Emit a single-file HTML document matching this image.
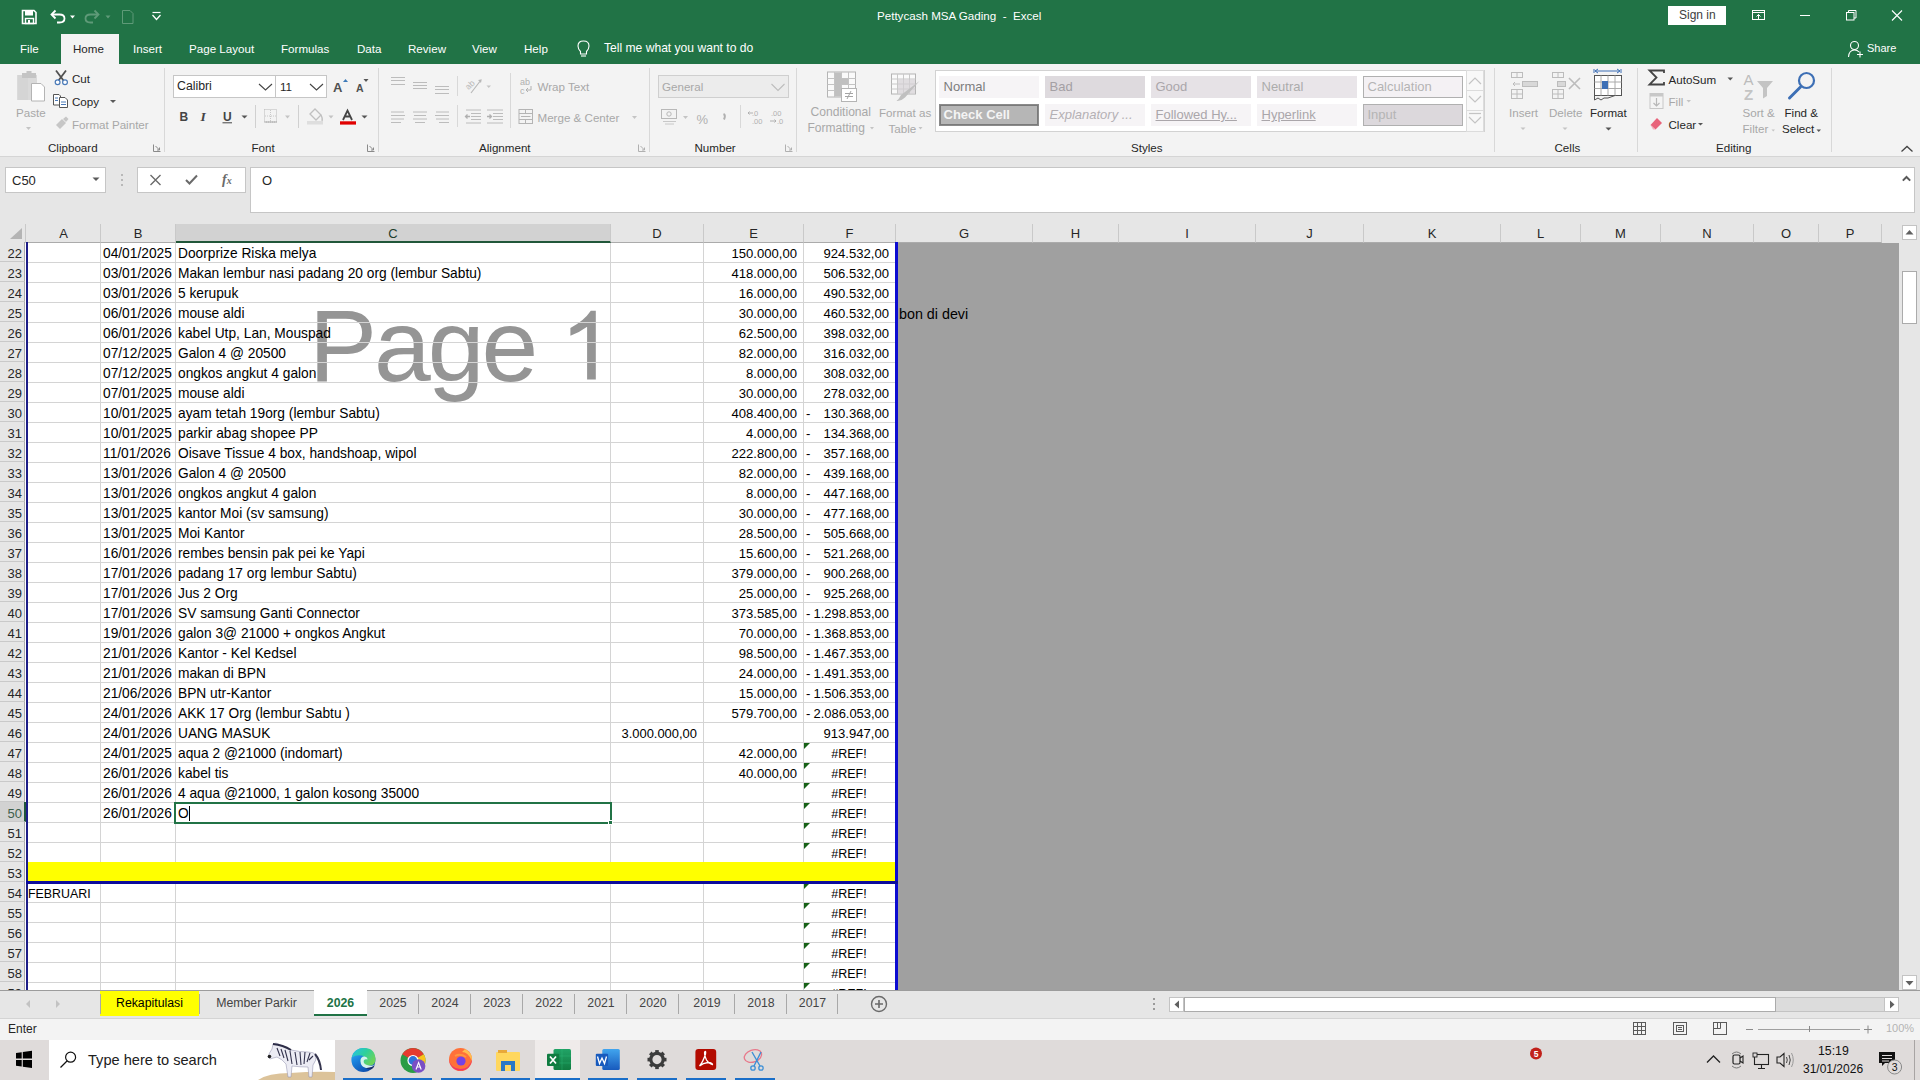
<!DOCTYPE html>
<html><head><meta charset="utf-8">
<style>
*{margin:0;padding:0;box-sizing:border-box}
html,body{width:1920px;height:1080px;overflow:hidden;background:#f3f3f3;font-family:"Liberation Sans",sans-serif;position:relative}
.a{position:absolute}
#title{left:0;top:0;width:1920px;height:64px;background:#217346}
.tt{position:absolute;color:#fff;font-size:12.3px;white-space:nowrap;line-height:14px}
.tab{position:absolute;top:43px;color:#fff;font-size:11.6px;line-height:11.6px;white-space:nowrap}
#hometab{left:61px;top:34px;width:58px;height:30px;background:#f3f3f3}
#ribbon{left:0;top:64px;width:1920px;height:93px;background:#f3f3f3;border-bottom:1px solid #d5d5d5}
.rl{position:absolute;font-size:12px;line-height:14px;color:#262626;white-space:nowrap}
.dis{color:#b1b1b1}
.gl{position:absolute;font-size:12px;line-height:14px;color:#262626;white-space:nowrap;top:141px}
.sep{position:absolute;width:1px;background:#d8d8d8}
#fbar{left:0;top:157px;width:1920px;height:67px;background:#e6e6e6}
.box{position:absolute;background:#fff;border:1px solid #c6c6c6}
#sheet{left:0;top:224px;width:1920px;height:767px;background:#fff;overflow:hidden}
.ch{position:absolute;top:0;height:19px;background:#e6e6e6;border-right:1px solid #c9c9c9;border-bottom:1px solid #ababab;font-size:13px;line-height:19px;text-align:center;color:#262626}
.ch.sel{background:#d2d2d2;border-bottom:2px solid #21573a;color:#1e3e2c}
.rh{position:absolute;left:0;width:25px;height:20px;background:#e6e6e6;border-bottom:1px solid #c9c9c9;border-right:1px solid #ababab;font-size:13px;line-height:23px;text-align:right;padding-right:2px;color:#262626}
.rh.sel{background:#d2d2d2;color:#3d5e4b;border-right:2px solid #21573a;width:26px}
.hl{position:absolute;left:26px;width:869px;height:1px;background:#d4d4d4}
.vl{position:absolute;top:243px;height:767px;width:1px;background:#d4d4d4}
.t{position:absolute;font-size:13.75px;line-height:20px;color:#000;white-space:nowrap}
.n{position:absolute;font-size:13.1px;line-height:20px;color:#000;white-space:nowrap}
.ref{width:92px;text-align:center;font-size:12.5px}
.tri{position:absolute;width:0;height:0;border-top:6px solid #176217;border-right:6px solid transparent;margin-top:0}
#gray{left:897px;top:243px;width:1002px;height:747px;background:#a0a0a0}
.stab{position:absolute;top:994px;height:18px;text-align:center;font-size:12.3px;line-height:18px;color:#444;white-space:nowrap}
.tsep{position:absolute;top:994px;width:1px;height:20px;background:#a8a8a8}
.u{position:absolute;font-size:11.6px;line-height:11.6px;color:#262626;white-space:nowrap}
.ud{position:absolute;font-size:11.6px;line-height:11.6px;color:#a8a8a8;white-space:nowrap}
.dd{position:absolute;width:0;height:0;border-left:3px solid transparent;border-right:3px solid transparent;border-top:3px solid #595959}
.ddl{position:absolute;width:0;height:0;border-left:3px solid transparent;border-right:3px solid transparent;border-top:3px solid #c0c0c0}
.sty{width:100px;height:22px}
.sl{position:absolute;font-size:13px;line-height:12px;white-space:nowrap}
</style></head><body>
<div id="title" class="a"></div>
<div class="tt" style="left:877px;top:9px;font-size:11.6px">Pettycash MSA Gading&nbsp; - &nbsp;Excel</div>
<svg class="a" style="left:0;top:0" width="180" height="34">
 <!-- save -->
 <path d="M22.5,10.5 H34 L36,12.5 V23.5 H22.5 Z" fill="none" stroke="#fff" stroke-width="1.6"/>
 <rect x="25" y="11" width="8" height="4.5" fill="#fff"/>
 <rect x="25.5" y="18.5" width="8" height="5" fill="none" stroke="#fff" stroke-width="1.4"/>
 <rect x="28" y="20" width="2" height="3.5" fill="#fff"/>
 <!-- undo -->
 <path d="M52,14.5 H59.5 Q64.5,14.5 64.5,18.5 Q64.5,22.5 59.5,22.5 H57" fill="none" stroke="#fff" stroke-width="1.8"/>
 <path d="M55.5,10.5 L51.5,14.5 L55.5,18.5" fill="none" stroke="#fff" stroke-width="1.8"/>
 <path d="M70,15.5 L75,15.5 L72.5,18.5 Z" fill="#fff"/>
 <!-- redo disabled -->
 <path d="M98,14.5 H90.5 Q85.5,14.5 85.5,18.5 Q85.5,22.5 90.5,22.5 H93" fill="none" stroke="#5f9a78" stroke-width="1.8"/>
 <path d="M94.5,10.5 L98.5,14.5 L94.5,18.5" fill="none" stroke="#5f9a78" stroke-width="1.8"/>
 <path d="M105.5,15.5 L110.5,15.5 L108,18.5 Z" fill="#5f9a78"/>
 <!-- new doc disabled -->
 <path d="M122.5,10.5 H130 L133,13.5 V23.5 H122.5 Z" fill="none" stroke="#5f9a78" stroke-width="1"/>
 <!-- customize -->
 <path d="M152.5,12.5 H160.5" stroke="#fff" stroke-width="1.2"/>
 <path d="M152.5,15 L156.5,19.5 L160.5,15" fill="none" stroke="#fff" stroke-width="1.3"/>
</svg>
<div class="a" style="left:1668px;top:6px;width:58px;height:19px;background:#fff"></div>
<div class="a" style="left:1679px;top:9px;font-size:12px;line-height:12px;color:#404040;white-space:nowrap">Sign in</div>
<svg class="a" style="left:1740px;top:0" width="180" height="64">
 <rect x="12.5" y="10.5" width="12" height="9" fill="none" stroke="#fff" stroke-width="1"/>
 <path d="M12.5,12.5 H24.5" stroke="#fff" stroke-width="1"/>
 <path d="M18.5,19 V14.5 M16.5,16.5 L18.5,14.5 L20.5,16.5" fill="none" stroke="#fff" stroke-width="1"/>
 <path d="M60,15.5 H70" stroke="#fff" stroke-width="1"/>
 <rect x="106.5" y="12.5" width="7.5" height="7.5" fill="none" stroke="#fff" stroke-width="1"/>
 <path d="M108.5,12.5 V10.5 H116 V18 H114" fill="none" stroke="#fff" stroke-width="1"/>
 <path d="M152,10.5 L162,20.5 M162,10.5 L152,20.5" stroke="#fff" stroke-width="1.1"/>
 <!-- share person -->
 <circle cx="114.5" cy="45.5" r="4" fill="none" stroke="#fff" stroke-width="1.1"/>
 <path d="M108.5,57 Q109,50 114.5,50 Q117.5,50 119,52" fill="none" stroke="#fff" stroke-width="1.1"/>
 <path d="M120,51.5 V57.5 M117,54.5 H123" stroke="#fff" stroke-width="1.1"/>
</svg>
<svg class="a" style="left:570px;top:34px" width="30" height="30">
 <path d="M10.5,17.5 Q8,15 8,12 Q8,7 13.5,7 Q19,7 19,12 Q19,15 16.5,17.5 V20 H10.5 Z" fill="none" stroke="#fff" stroke-width="1.1"/>
 <path d="M11,22 H16" stroke="#fff" stroke-width="1.1"/>
</svg>
<div id="hometab" class="a"></div>
<div class="tab" style="left:20px">File</div>
<div class="tab" style="left:73px;color:#262626">Home</div>
<div class="tab" style="left:133px">Insert</div>
<div class="tab" style="left:189px">Page Layout</div>
<div class="tab" style="left:281px">Formulas</div>
<div class="tab" style="left:357px">Data</div>
<div class="tab" style="left:408px">Review</div>
<div class="tab" style="left:472px">View</div>
<div class="tab" style="left:524px">Help</div>
<div class="tab" style="left:604px;font-size:12.1px">Tell me what you want to do</div>
<div class="tab" style="left:1867px;font-size:11px">Share</div>

<div id="ribbon" class="a"></div>
<!-- ===== Clipboard ===== -->
<svg class="a" style="left:0;top:64px" width="170" height="93" viewBox="0 64 170 93">
 <!-- paste -->
 <rect x="17" y="75" width="20" height="25" fill="#dadada"/>
 <path d="M19,75 V100 M21,75 V100 M23,75 V100 M25,75 V100 M27,75 V100" stroke="#d0d0d0" stroke-width="1"/>
 <rect x="22" y="73" width="14" height="5" fill="#c4c4c4"/>
 <rect x="26.5" y="71" width="5" height="3" fill="#c4c4c4"/>
 <path d="M31.5,83.5 H41 L44.5,87 V101 H31.5 Z" fill="#fff" stroke="#b4b4b4" stroke-width="1"/>
 <path d="M26,127 L31,127 L28.5,130 Z" fill="#c4c4c4"/>
 <!-- scissors -->
 <path d="M56,70.5 L63.5,80.5 M66,70.5 L58.5,80.5" stroke="#505050" stroke-width="1.8"/>
 <circle cx="57.6" cy="82.3" r="2.4" fill="#fff" stroke="#4a7ab8" stroke-width="1.2"/>
 <circle cx="65" cy="82.3" r="2.4" fill="#fff" stroke="#4a7ab8" stroke-width="1.2"/>
 <!-- copy -->
 <path d="M53.5,94.5 H59 L60.5,96 V105 H53.5 Z" fill="#fff" stroke="#555" stroke-width="1"/>
 <path d="M59.5,97.5 H65 L67.5,100 V107.5 H59.5 Z" fill="#fff" stroke="#555" stroke-width="1"/>
 <path d="M55,98 H58 M55,100.5 H58 M61,102 H66 M61,104.5 H66" stroke="#4a7ab8" stroke-width="1"/>
 <!-- format painter -->
 <path d="M56,125 L62,119 L66,123 L60,129 Z" fill="#c6c6c6"/>
 <path d="M63,119 L66,116.5 L68.5,119 L66,122 Z" fill="#c6c6c6"/>
 <!-- launcher -->
 <path d="M153.5,144.5 V151.5 H160.5" fill="none" stroke="#8a8a8a" stroke-width="1"/>
 <path d="M155.5,146 L159.5,150 M159.5,147.5 V150 H157" fill="none" stroke="#8a8a8a" stroke-width="1"/>
</svg>
<div class="ud" style="left:16px;top:107px">Paste</div>
<div class="u" style="left:72px;top:73px">Cut</div>
<div class="u" style="left:72px;top:95.5px">Copy</div>
<div class="dd" style="left:110px;top:100px"></div>
<div class="ud" style="left:72px;top:119px">Format Painter</div>
<div class="u" style="left:48px;top:142px">Clipboard</div>
<div class="sep" style="left:164px;top:68px;height:84px"></div>

<!-- ===== Font ===== -->
<div class="box" style="left:173px;top:75px;width:103px;height:23px"></div>
<div class="box" style="left:275px;top:75px;width:52px;height:23px"></div>
<div class="u" style="left:177px;top:81px;font-size:12.3px">Calibri</div>
<div class="u" style="left:280px;top:81px">11</div>
<svg class="a" style="left:170px;top:64px" width="210" height="93" viewBox="170 64 210 93">
 <path d="M259,84 L265.5,90 L272,84" fill="none" stroke="#444" stroke-width="1.1"/>
 <path d="M310,84 L316.5,90 L323,84" fill="none" stroke="#444" stroke-width="1.1"/>
 <!-- grow/shrink -->
 <text x="333" y="91.5" font-family="Liberation Sans" font-weight="bold" font-size="13" fill="#505050">A</text>
 <path d="M343,82 L345.5,79 L348,82 Z" fill="#3d7ab8"/>
 <text x="356" y="91.5" font-family="Liberation Sans" font-weight="bold" font-size="10.5" fill="#505050">A</text>
 <path d="M363.5,79 L368.5,79 L366,82 Z" fill="#555"/>
 <!-- B I U -->
 <text x="179.5" y="120.5" font-family="Liberation Sans" font-weight="bold" font-size="12" fill="#444">B</text>
 <text x="200.5" y="120.5" font-family="Liberation Serif" font-weight="bold" font-style="italic" font-size="13.5" fill="#444">I</text>
 <text x="223" y="120.5" font-family="Liberation Sans" font-weight="bold" font-size="12" fill="#444">U</text>
 <path d="M222.5,122.8 H232" stroke="#444" stroke-width="1"/>
 <path d="M241.5,115.5 L247.5,115.5 L244.5,118.5 Z" fill="#555"/>
 <rect x="255" y="105" width="1" height="23" fill="#d0d0d0"/>
 <!-- borders -->
 <rect x="264.5" y="109.5" width="12" height="12.5" fill="none" stroke="#b8b8b8" stroke-width="1" stroke-dasharray="1,1"/>
 <path d="M270.5,110 V122 M265,116 H276" stroke="#c8c8c8" stroke-width="1" stroke-dasharray="1,1"/>
 <path d="M264.5,122 H277" stroke="#a8a8a8" stroke-width="1"/>
 <path d="M285,115.5 L290,115.5 L287.5,118.5 Z" fill="#c4c4c4"/>
 <rect x="298" y="105" width="1" height="23" fill="#d0d0d0"/>
 <!-- fill color -->
 <path d="M310,114 L315,109 L321,115 L316,120 Z" fill="none" stroke="#c0c0c0" stroke-width="1.3"/>
 <path d="M321,115 Q323,119 322,121" fill="none" stroke="#c0c0c0" stroke-width="1.3"/>
 <rect x="307" y="121" width="16" height="3.5" fill="#dedede"/>
 <path d="M328.5,115.5 L333.5,115.5 L331,118.5 Z" fill="#c4c4c4"/>
 <!-- font color -->
 <path d="M343,120 L347.5,110.5 L352,120 M344.8,116.5 H350.2" fill="none" stroke="#444" stroke-width="1.8"/>
 <rect x="340" y="121.3" width="16" height="3.3" fill="#e00000"/>
 <path d="M361.5,115.5 L367.5,115.5 L364.5,118.5 Z" fill="#555"/>
 <!-- launcher -->
 <path d="M367.5,144.5 V151.5 H374.5" fill="none" stroke="#8a8a8a" stroke-width="1"/>
 <path d="M369.5,146 L373.5,150 M373.5,147.5 V150 H371" fill="none" stroke="#8a8a8a" stroke-width="1"/>
</svg>
<div class="u" style="left:251.5px;top:142px">Font</div>
<div class="sep" style="left:378px;top:68px;height:84px"></div>

<!-- ===== Alignment ===== -->
<svg class="a" style="left:380px;top:64px" width="270" height="93" viewBox="380 64 270 93">
 <g stroke="#bcbcbc" stroke-width="1">
 <path d="M391,77.5 H405 M391,80.5 H405 M391,84.5 H405"/>
 <path d="M413,82.5 H427 M413,85.5 H427 M413,88.5 H427"/>
 <path d="M435,86.5 H449 M435,89.5 H449 M435,93.5 H449"/>
 <path d="M391,112 H404 M391,115.5 H405 M391,119 H404 M391,122.5 H401"/>
 <path d="M413,112 H427 M414,115.5 H426 M413,119 H427 M415,122.5 H425"/>
 <path d="M436,112 H449 M435,115.5 H449 M436,119 H449 M439,122.5 H449"/>
 <path d="M466,110 H481 M471,113.5 H481 M471,116.5 H481 M471,119.5 H481 M466,123 H481"/>
 <path d="M487,110 H503 M493,113.5 H503 M493,116.5 H503 M493,119.5 H503 M487,123 H503"/>
 </g>
 <path d="M470,116.5 L466,116.5 M467.5,114.5 L465.5,116.5 L467.5,118.5" fill="none" stroke="#b0b0b0" stroke-width="1.3"/>
 <path d="M487,116.5 L491,116.5 M489.5,114.5 L491.5,116.5 L489.5,118.5" fill="none" stroke="#b0b0b0" stroke-width="1.3"/>
 <rect x="457" y="76" width="1" height="20" fill="#d8d8d8"/>
 <rect x="457" y="105" width="1" height="22" fill="#d8d8d8"/>
 <text x="466" y="88" font-family="Liberation Sans" font-size="8.5" fill="#b8b8b8" transform="rotate(-45 470 86)">ab</text>
 <path d="M471,93 L481,80 M478.5,80.5 L481,80 L480.5,82.5" fill="none" stroke="#b8b8b8" stroke-width="1.2"/>
 <path d="M486.5,85.5 L491,85.5 L488.75,88 Z" fill="#c4c4c4"/>
 <rect x="510" y="73" width="1" height="55" fill="#d8d8d8"/>
 <text x="520" y="85" font-family="Liberation Sans" font-size="9" fill="#b0b0b0">ab</text>
 <text x="520" y="93.5" font-family="Liberation Sans" font-size="9" fill="#b0b0b0">c</text>
 <path d="M526,90 H531 V86 M526,90 L528,88 M526,90 L528,92" fill="none" stroke="#b0b0b0" stroke-width="1"/>
 <rect x="519" y="109.5" width="13.5" height="14" fill="none" stroke="#b4b4b4" stroke-width="1"/>
 <path d="M519,113.5 H532.5 M519,119.5 H532.5 M525.5,109.5 V113.5 M525.5,119.5 V123.5 M521,116.5 H530.5" fill="none" stroke="#b4b4b4" stroke-width="1"/>
 <path d="M632,116 L637,116 L634.5,119 Z" fill="#c4c4c4"/>
 <path d="M638.5,144.5 V151.5 H645.5" fill="none" stroke="#b0b0b0" stroke-width="1"/>
 <path d="M640.5,146 L644.5,150 M644.5,147.5 V150 H642" fill="none" stroke="#b0b0b0" stroke-width="1"/>
</svg>
<div class="ud" style="left:537.5px;top:81px">Wrap Text</div>
<div class="ud" style="left:537.5px;top:112px">Merge &amp; Center</div>
<div class="u" style="left:479px;top:142px">Alignment</div>
<div class="sep" style="left:649px;top:68px;height:84px"></div>

<!-- ===== Number ===== -->
<div class="a" style="left:658px;top:75px;width:131px;height:23px;background:#ececec;border:1px solid #cfcfcf"></div>
<div class="ud" style="left:662px;top:81px">General</div>
<svg class="a" style="left:650px;top:64px" width="150" height="93" viewBox="650 64 150 93">
 <path d="M771.5,84 L778,90.5 L784.5,84" fill="none" stroke="#bdbdbd" stroke-width="1.1"/>
 <rect x="661.5" y="109.5" width="15" height="9" fill="none" stroke="#b8b8b8" stroke-width="1"/>
 <circle cx="669" cy="114" r="2.2" fill="none" stroke="#b8b8b8" stroke-width="1"/>
 <path d="M663,121.5 H676 M665,124 H674" stroke="#c8c8c8" stroke-width="1"/>
 <path d="M683,116 L688,116 L685.5,119 Z" fill="#c4c4c4"/>
 <text x="696.5" y="123.5" font-family="Liberation Sans" font-size="13" fill="#b0b0b0">%</text>
 <path d="M723.5,114 Q726,115 724,119.5" fill="none" stroke="#b0b0b0" stroke-width="2"/>
 <rect x="740" y="105" width="1" height="23" fill="#d8d8d8"/>
 <text x="752" y="116" font-family="Liberation Sans" font-size="7.5" fill="#b0b0b0">.0</text>
 <text x="752" y="123.5" font-family="Liberation Sans" font-size="7.5" fill="#b0b0b0">.00</text>
 <path d="M748,113 H753 M749.5,111.5 L748,113 L749.5,114.5" fill="none" stroke="#b0b0b0" stroke-width="1"/>
 <text x="771" y="116" font-family="Liberation Sans" font-size="7.5" fill="#b0b0b0">.00</text>
 <text x="777" y="123.5" font-family="Liberation Sans" font-size="7.5" fill="#b0b0b0">.0</text>
 <path d="M770,121 H776 M774.5,119.5 L776,121 L774.5,122.5" fill="none" stroke="#b0b0b0" stroke-width="1"/>
 <path d="M785.5,144.5 V151.5 H792.5" fill="none" stroke="#b0b0b0" stroke-width="1"/>
 <path d="M787.5,146 L791.5,150 M791.5,147.5 V150 H789" fill="none" stroke="#b0b0b0" stroke-width="1"/>
</svg>
<div class="u" style="left:694.5px;top:142px">Number</div>
<div class="sep" style="left:796px;top:68px;height:84px"></div>

<!-- ===== Styles ===== -->
<svg class="a" style="left:800px;top:64px" width="140" height="93" viewBox="800 64 140 93">
 <!-- conditional formatting -->
 <rect x="827.5" y="72" width="28" height="25" fill="#fafafa" stroke="#b4b4b4" stroke-width="1"/>
 <path d="M827.5,78.5 H855.5 M827.5,84.5 H855.5 M827.5,90.5 H855.5 M834.5,72 V97 M841.5,72 V97 M848.5,72 V97" stroke="#c4c4c4" stroke-width="1"/>
 <rect x="835" y="72.5" width="6" height="24" fill="#c0c0c0"/>
 <rect x="835" y="78.5" width="13" height="6" fill="#c0c0c0"/>
 <rect x="841.5" y="88.5" width="15" height="13" fill="#fff" stroke="#b4b4b4" stroke-width="1"/>
 <path d="M845,93.5 H853 M845,96.5 H853 M851,91 L847,99" stroke="#a4a4a4" stroke-width="1"/>
 <!-- format as table -->
 <rect x="891.5" y="74" width="24" height="20" fill="#fafafa" stroke="#b4b4b4" stroke-width="1"/>
 <path d="M891.5,79 H915.5 M891.5,84 H915.5 M891.5,89 H915.5 M897.5,74 V94 M903.5,74 V94 M909.5,74 V94" stroke="#c8c8c8" stroke-width="1"/>
 <rect x="898" y="79.5" width="17" height="14" fill="#d4d0d4" opacity="0.7"/>
 <path d="M919.5,81 L905,97.5 Q901,101.5 896.5,101 Q899,99 901,95 Z" fill="#c0c0c0"/>
 <path d="M870,127 L874,127 L872,129.5 Z" fill="#c4c4c4"/>
 <path d="M918.5,127 L922.5,127 L920.5,129.5 Z" fill="#c4c4c4"/>
</svg>
<div class="ud" style="left:810.5px;top:107px;font-size:12.1px">Conditional</div>
<div class="ud" style="left:807.5px;top:123px;font-size:12px">Formatting</div>
<div class="ud" style="left:879px;top:107px">Format as</div>
<div class="ud" style="left:888.5px;top:123px">Table</div>
<!-- gallery -->
<div class="a" style="left:935px;top:70px;width:550px;height:62px;background:#fff;border:1px solid #d2d2d2"></div>
<div class="a sty" style="left:939px;top:76px;background:#f6f4f6"></div>
<div class="a sty" style="left:1045px;top:76px;background:#dedade"></div>
<div class="a sty" style="left:1151px;top:76px;background:#e6e2e6"></div>
<div class="a sty" style="left:1257px;top:76px;background:#e9e5e9"></div>
<div class="a sty" style="left:1363px;top:76px;background:#f4f1f4;border:1px solid #b0b0b0"></div>
<div class="a sty" style="left:939px;top:104px;background:#b6b6b6;border:2px double #7a7a7a;outline:1px solid #8a8a8a;outline-offset:-1px"></div>
<div class="a sty" style="left:1045px;top:104px;background:#f6f4f6"></div>
<div class="a sty" style="left:1151px;top:104px;background:#f6f4f6"></div>
<div class="a sty" style="left:1257px;top:104px;background:#f6f4f6"></div>
<div class="a sty" style="left:1363px;top:104px;background:#dcd8dc;border:1px solid #b0b0b0"></div>
<div class="sl" style="left:943.5px;top:81px;color:#7d7d7d">Normal</div>
<div class="sl" style="left:1049.5px;top:81px;color:#a4a0a4">Bad</div>
<div class="sl" style="left:1155.5px;top:81px;color:#aaa6aa">Good</div>
<div class="sl" style="left:1261.5px;top:81px;color:#acacac">Neutral</div>
<div class="sl" style="left:1367.5px;top:81px;color:#b4b4b4">Calculation</div>
<div class="sl" style="left:943.5px;top:109px;color:#f4f4f4;font-weight:bold">Check Cell</div>
<div class="sl" style="left:1049.5px;top:109px;color:#b4b0b4;font-style:italic">Explanatory ...</div>
<div class="sl" style="left:1155.5px;top:109px;color:#aaa6aa;text-decoration:underline">Followed Hy...</div>
<div class="sl" style="left:1261.5px;top:109px;color:#aaa6aa;text-decoration:underline">Hyperlink</div>
<div class="sl" style="left:1367.5px;top:109px;color:#b4b4b4">Input</div>
<svg class="a" style="left:1466px;top:70px" width="20" height="62">
 <rect x="0.5" y="0.5" width="17" height="61" fill="#f8f8f8" stroke="#dcdcdc"/>
 <path d="M0.5,20.5 H17.5 M0.5,40.5 H17.5" stroke="#dcdcdc"/>
 <path d="M3,14 L9,8 L15,14" fill="none" stroke="#c4c4c4" stroke-width="1.2"/>
 <path d="M3,26 L9,32 L15,26" fill="none" stroke="#c4c4c4" stroke-width="1.2"/>
 <path d="M3,43.5 H15" stroke="#c4c4c4" stroke-width="1.2"/>
 <path d="M3,47 L9,53 L15,47" fill="none" stroke="#c4c4c4" stroke-width="1.2"/>
</svg>
<div class="u" style="left:1131px;top:142px">Styles</div>
<div class="sep" style="left:1494px;top:68px;height:84px"></div>

<!-- ===== Cells ===== -->
<svg class="a" style="left:1500px;top:64px" width="140" height="93" viewBox="1500 64 140 93">
 <!-- insert -->
 <g fill="none" stroke="#bcbcbc" stroke-width="1">
 <rect x="1511.5" y="72.5" width="11" height="5"/><path d="M1517,72.5 V77.5"/>
 <rect x="1511.5" y="89.5" width="11" height="9"/><path d="M1511.5,94 H1522.5 M1517,89.5 V98.5"/>
 <rect x="1522.5" y="81.5" width="15" height="5" fill="#d8d8d8"/>
 <path d="M1520,84 H1513 M1515,82 L1513,84 L1515,86"/>
 <!-- delete -->
 <rect x="1552.5" y="72.5" width="11" height="5"/><path d="M1558,72.5 V77.5"/>
 <rect x="1552.5" y="89.5" width="11" height="9"/><path d="M1552.5,94 H1563.5 M1558,89.5 V98.5"/>
 <rect x="1557.5" y="81.5" width="8" height="5" fill="#d8d8d8"/>
 </g>
 <path d="M1569,78 L1580,89 M1580,78 L1569,89" stroke="#bcbcbc" stroke-width="1.6"/>
 <!-- format -->
 <path d="M1594,69 V73 M1621,69 V73 M1595,71 H1620 M1598,69 L1595,71 L1598,73 M1617,69 L1620,71 L1617,73" fill="none" stroke="#3d6fb5" stroke-width="1"/>
 <rect x="1594.5" y="75.5" width="27" height="20" fill="#fff" stroke="#555" stroke-width="1"/>
 <path d="M1594.5,82 H1621.5 M1594.5,88.5 H1621.5 M1601,75.5 V95.5 M1608,75.5 V95.5 M1615,75.5 V95.5" stroke="#aaa" stroke-width="1"/>
 <rect x="1602" y="81" width="6" height="8" fill="#3d6fb5"/>
 <path d="M1594.5,95.5 V100 L1598,98 L1601,100 L1604,98 L1608,98 L1615,95.5" fill="none" stroke="#555" stroke-width="1"/>
 <path d="M1520.5,127.5 L1525.5,127.5 L1523,130 Z" fill="#c4c4c4"/>
 <path d="M1562.5,127.5 L1567.5,127.5 L1565,130 Z" fill="#c4c4c4"/>
 <path d="M1605.5,127.5 L1611.5,127.5 L1608.5,130.5 Z" fill="#555"/>
</svg>
<div class="ud" style="left:1509px;top:107px">Insert</div>
<div class="ud" style="left:1549px;top:107px">Delete</div>
<div class="u" style="left:1590px;top:107px">Format</div>
<div class="u" style="left:1554.5px;top:142px">Cells</div>
<div class="sep" style="left:1637px;top:68px;height:84px"></div>

<!-- ===== Editing ===== -->
<svg class="a" style="left:1640px;top:64px" width="190" height="93" viewBox="1640 64 190 93">
 <path d="M1664,73 V70.5 H1649.5 L1656.5,77.5 L1649.5,84.5 H1664 V82" fill="none" stroke="#444" stroke-width="1.8"/>
 <path d="M1727.5,77.5 L1733,77.5 L1730.25,80.5 Z" fill="#555"/>
 <rect x="1650" y="93.5" width="13" height="15" fill="#f4f4f4" stroke="#c8c8c8" stroke-width="1"/>
 <rect x="1650" y="93.5" width="13" height="3" fill="#c8c8c8"/>
 <path d="M1656.5,98 V106 M1653.5,103 L1656.5,106 L1659.5,103" fill="none" stroke="#b8b8b8" stroke-width="1.2"/>
 <path d="M1686.5,100 L1691,100 L1688.75,102.5 Z" fill="#c4c4c4"/>
 <path d="M1650.5,125 L1657,118 L1662,123 L1655.5,129.5 Z" fill="#e8637a"/>
 <path d="M1650.5,125 L1655.5,129.5 L1653,129.5 Z" fill="#f4b0bc"/>
 <path d="M1698,123 L1703,123 L1700.5,125.5 Z" fill="#555"/>
 <!-- sort filter -->
 <text x="1743.5" y="85" font-family="Liberation Sans" font-size="15" fill="#bcbcbc">A</text>
 <text x="1744" y="99.5" font-family="Liberation Sans" font-weight="bold" font-size="15" fill="#c4c4c4">Z</text>
 <path d="M1757,81 H1773 L1767,88 V96 L1763,98.5 V88 Z" fill="#c4c4c4"/>
 <path d="M1771.5,129.5 L1775,129.5 L1773.25,131.5 Z" fill="#c4c4c4"/>
 <!-- find -->
 <circle cx="1806.5" cy="80.5" r="7.5" fill="none" stroke="#3d6fb5" stroke-width="2.2"/>
 <path d="M1800.5,87 L1789.5,98" stroke="#3d6fb5" stroke-width="3" stroke-linecap="round"/>
 <path d="M1816.5,129.5 L1821,129.5 L1818.75,132 Z" fill="#555"/>
</svg>
<div class="u" style="left:1668.5px;top:73.5px">AutoSum</div>
<div class="ud" style="left:1668.5px;top:96px">Fill</div>
<div class="u" style="left:1668.5px;top:119px">Clear</div>
<div class="ud" style="left:1742.5px;top:107px">Sort &amp;</div>
<div class="ud" style="left:1742.5px;top:123px">Filter</div>
<div class="u" style="left:1784.5px;top:107px">Find &amp;</div>
<div class="u" style="left:1782px;top:123px">Select</div>
<div class="u" style="left:1716px;top:142px">Editing</div>
<div class="sep" style="left:1831px;top:68px;height:84px"></div>
<svg class="a" style="left:1895px;top:140px" width="24" height="16"><path d="M6.5,11.5 L12,6.5 L17.5,11.5" fill="none" stroke="#444" stroke-width="1.3"/></svg>


<div id="fbar" class="a"></div>
<div class="box" style="left:5px;top:167px;width:101px;height:26px"></div>
<div class="rl" style="left:12px;top:174px;font-size:13px">C50</div>
<div class="box" style="left:137px;top:167px;width:109px;height:26px"></div>
<svg class="a" style="left:80px;top:168px" width="180" height="26">
 <path d="M12.5,9.5 L19.5,9.5 L16,13 Z" fill="#5a5a5a"/>
 <circle cx="42" cy="7" r="1" fill="#a8a8a8"/><circle cx="42" cy="12" r="1" fill="#a8a8a8"/><circle cx="42" cy="17" r="1" fill="#a8a8a8"/>
 <path d="M70.5,7 L80.5,17 M80.5,7 L70.5,17" stroke="#6a6a6a" stroke-width="1.4"/>
 <path d="M106,12 L109.5,15.5 L117,7.5" fill="none" stroke="#6a6a6a" stroke-width="2"/>
</svg>
<div class="a" style="left:222px;top:173px;font-family:'Liberation Serif',serif;font-style:italic;font-weight:bold;font-size:14px;line-height:14px;color:#6a6a6a">f<span style="font-size:10px">x</span></div>
<svg class="a" style="left:1898px;top:172px;z-index:3" width="16" height="12"><path d="M4.8,8.6 L8.5,5 L12.2,8.6" fill="none" stroke="#5a5a5a" stroke-width="2"/></svg>
<div class="box" style="left:250px;top:167px;width:1665px;height:46px"></div>
<div class="rl" style="left:262px;top:174px;font-size:13px">O</div>

<div id="sheet" class="a">
</div>
<div class="a" style="left:0;top:224px;width:1899px;height:19px;background:#e6e6e6"></div>
<svg class="a" style="left:0;top:224px;z-index:2" width="26" height="19"><path d="M22,4 L22,15 L10,15 Z" fill="#b4b4b4"/><path d="M25.5,0 V19" stroke="#c9c9c9"/></svg>
<div style="position:absolute;left:0;top:224px;width:1920px;height:19px">
<div class="ch" style="left:27px;width:74px">A</div>
<div class="ch" style="left:101px;width:75px">B</div>
<div class="ch sel" style="left:176px;width:435px">C</div>
<div class="ch" style="left:611px;width:93px">D</div>
<div class="ch" style="left:704px;width:100px">E</div>
<div class="ch" style="left:804px;width:92px">F</div>
<div class="ch" style="left:896px;width:137px">G</div>
<div class="ch" style="left:1033px;width:86px">H</div>
<div class="ch" style="left:1119px;width:137px">I</div>
<div class="ch" style="left:1256px;width:108px">J</div>
<div class="ch" style="left:1364px;width:137px">K</div>
<div class="ch" style="left:1501px;width:80px">L</div>
<div class="ch" style="left:1581px;width:80px">M</div>
<div class="ch" style="left:1661px;width:93px">N</div>
<div class="ch" style="left:1754px;width:65px">O</div>
<div class="ch" style="left:1819px;width:63px">P</div>
</div>
<div style="position:absolute;left:0;top:0">
<div class="rh" style="top:242px">22</div>
<div class="rh" style="top:262px">23</div>
<div class="rh" style="top:282px">24</div>
<div class="rh" style="top:302px">25</div>
<div class="rh" style="top:322px">26</div>
<div class="rh" style="top:342px">27</div>
<div class="rh" style="top:362px">28</div>
<div class="rh" style="top:382px">29</div>
<div class="rh" style="top:402px">30</div>
<div class="rh" style="top:422px">31</div>
<div class="rh" style="top:442px">32</div>
<div class="rh" style="top:462px">33</div>
<div class="rh" style="top:482px">34</div>
<div class="rh" style="top:502px">35</div>
<div class="rh" style="top:522px">36</div>
<div class="rh" style="top:542px">37</div>
<div class="rh" style="top:562px">38</div>
<div class="rh" style="top:582px">39</div>
<div class="rh" style="top:602px">40</div>
<div class="rh" style="top:622px">41</div>
<div class="rh" style="top:642px">42</div>
<div class="rh" style="top:662px">43</div>
<div class="rh" style="top:682px">44</div>
<div class="rh" style="top:702px">45</div>
<div class="rh" style="top:722px">46</div>
<div class="rh" style="top:742px">47</div>
<div class="rh" style="top:762px">48</div>
<div class="rh" style="top:782px">49</div>
<div class="rh sel" style="top:802px">50</div>
<div class="rh" style="top:822px">51</div>
<div class="rh" style="top:842px">52</div>
<div class="rh" style="top:862px">53</div>
<div class="rh" style="top:882px">54</div>
<div class="rh" style="top:902px">55</div>
<div class="rh" style="top:922px">56</div>
<div class="rh" style="top:942px">57</div>
<div class="rh" style="top:962px">58</div>
<div class="rh" style="top:982px">59</div>
</div>
<div id="gray" class="a"></div>
<div class="a" id="wm" style="left:309px;top:286px;font-size:102px;line-height:120px;color:#959595;white-space:nowrap;letter-spacing:-3px">Page</div>
<svg class="a" style="left:0;top:0" width="700" height="420"><path d="M590.8,310.8 L595.8,310.8 L595.8,379.6 L587.1,379.6 L587.1,326.7 Q580,332 570.4,335.8 L570.4,327.9 Q584,321 590.8,310.8 Z" fill="#959595"/></svg>
<div class="hl" style="top:262px"></div>
<div class="hl" style="top:282px"></div>
<div class="hl" style="top:302px"></div>
<div class="hl" style="top:322px"></div>
<div class="hl" style="top:342px"></div>
<div class="hl" style="top:362px"></div>
<div class="hl" style="top:382px"></div>
<div class="hl" style="top:402px"></div>
<div class="hl" style="top:422px"></div>
<div class="hl" style="top:442px"></div>
<div class="hl" style="top:462px"></div>
<div class="hl" style="top:482px"></div>
<div class="hl" style="top:502px"></div>
<div class="hl" style="top:522px"></div>
<div class="hl" style="top:542px"></div>
<div class="hl" style="top:562px"></div>
<div class="hl" style="top:582px"></div>
<div class="hl" style="top:602px"></div>
<div class="hl" style="top:622px"></div>
<div class="hl" style="top:642px"></div>
<div class="hl" style="top:662px"></div>
<div class="hl" style="top:682px"></div>
<div class="hl" style="top:702px"></div>
<div class="hl" style="top:722px"></div>
<div class="hl" style="top:742px"></div>
<div class="hl" style="top:762px"></div>
<div class="hl" style="top:782px"></div>
<div class="hl" style="top:802px"></div>
<div class="hl" style="top:822px"></div>
<div class="hl" style="top:842px"></div>
<div class="hl" style="top:862px"></div>
<div class="hl" style="top:882px"></div>
<div class="hl" style="top:902px"></div>
<div class="hl" style="top:922px"></div>
<div class="hl" style="top:942px"></div>
<div class="hl" style="top:962px"></div>
<div class="hl" style="top:982px"></div>
<div class="hl" style="top:1002px"></div>
<div class="vl" style="left:100px"></div>
<div class="vl" style="left:175px"></div>
<div class="vl" style="left:610px"></div>
<div class="vl" style="left:703px"></div>
<div class="vl" style="left:803px"></div>
<div class="t" style="left:103px;top:244px">04/01/2025</div>
<div class="t" style="left:178px;top:244px">Doorprize Riska melya</div>
<div class="n" style="right:1123px;top:244px">150.000,00</div>
<div class="n" style="right:1031px;top:244px">924.532,00</div>
<div class="t" style="left:103px;top:264px">03/01/2026</div>
<div class="t" style="left:178px;top:264px">Makan lembur nasi padang 20 org (lembur Sabtu)</div>
<div class="n" style="right:1123px;top:264px">418.000,00</div>
<div class="n" style="right:1031px;top:264px">506.532,00</div>
<div class="t" style="left:103px;top:284px">03/01/2026</div>
<div class="t" style="left:178px;top:284px">5 kerupuk</div>
<div class="n" style="right:1123px;top:284px">16.000,00</div>
<div class="n" style="right:1031px;top:284px">490.532,00</div>
<div class="t" style="left:103px;top:304px">06/01/2026</div>
<div class="t" style="left:178px;top:304px">mouse aldi</div>
<div class="n" style="right:1123px;top:304px">30.000,00</div>
<div class="n" style="right:1031px;top:304px">460.532,00</div>
<div class="t" style="left:103px;top:324px">06/01/2026</div>
<div class="t" style="left:178px;top:324px">kabel Utp, Lan, Mouspad</div>
<div class="n" style="right:1123px;top:324px">62.500,00</div>
<div class="n" style="right:1031px;top:324px">398.032,00</div>
<div class="t" style="left:103px;top:344px">07/12/2025</div>
<div class="t" style="left:178px;top:344px">Galon 4 @ 20500</div>
<div class="n" style="right:1123px;top:344px">82.000,00</div>
<div class="n" style="right:1031px;top:344px">316.032,00</div>
<div class="t" style="left:103px;top:364px">07/12/2025</div>
<div class="t" style="left:178px;top:364px">ongkos angkut 4 galon</div>
<div class="n" style="right:1123px;top:364px">8.000,00</div>
<div class="n" style="right:1031px;top:364px">308.032,00</div>
<div class="t" style="left:103px;top:384px">07/01/2025</div>
<div class="t" style="left:178px;top:384px">mouse aldi</div>
<div class="n" style="right:1123px;top:384px">30.000,00</div>
<div class="n" style="right:1031px;top:384px">278.032,00</div>
<div class="t" style="left:103px;top:404px">10/01/2025</div>
<div class="t" style="left:178px;top:404px">ayam tetah 19org (lembur Sabtu)</div>
<div class="n" style="right:1123px;top:404px">408.400,00</div>
<div class="n" style="left:806px;top:404px">-</div>
<div class="n" style="right:1031px;top:404px">130.368,00</div>
<div class="t" style="left:103px;top:424px">10/01/2025</div>
<div class="t" style="left:178px;top:424px">parkir abag shopee PP</div>
<div class="n" style="right:1123px;top:424px">4.000,00</div>
<div class="n" style="left:806px;top:424px">-</div>
<div class="n" style="right:1031px;top:424px">134.368,00</div>
<div class="t" style="left:103px;top:444px">11/01/2026</div>
<div class="t" style="left:178px;top:444px">Oisave Tissue 4 box, handshoap, wipol</div>
<div class="n" style="right:1123px;top:444px">222.800,00</div>
<div class="n" style="left:806px;top:444px">-</div>
<div class="n" style="right:1031px;top:444px">357.168,00</div>
<div class="t" style="left:103px;top:464px">13/01/2026</div>
<div class="t" style="left:178px;top:464px">Galon 4 @ 20500</div>
<div class="n" style="right:1123px;top:464px">82.000,00</div>
<div class="n" style="left:806px;top:464px">-</div>
<div class="n" style="right:1031px;top:464px">439.168,00</div>
<div class="t" style="left:103px;top:484px">13/01/2026</div>
<div class="t" style="left:178px;top:484px">ongkos angkut 4 galon</div>
<div class="n" style="right:1123px;top:484px">8.000,00</div>
<div class="n" style="left:806px;top:484px">-</div>
<div class="n" style="right:1031px;top:484px">447.168,00</div>
<div class="t" style="left:103px;top:504px">13/01/2025</div>
<div class="t" style="left:178px;top:504px">kantor Moi (sv samsung)</div>
<div class="n" style="right:1123px;top:504px">30.000,00</div>
<div class="n" style="left:806px;top:504px">-</div>
<div class="n" style="right:1031px;top:504px">477.168,00</div>
<div class="t" style="left:103px;top:524px">13/01/2025</div>
<div class="t" style="left:178px;top:524px">Moi Kantor</div>
<div class="n" style="right:1123px;top:524px">28.500,00</div>
<div class="n" style="left:806px;top:524px">-</div>
<div class="n" style="right:1031px;top:524px">505.668,00</div>
<div class="t" style="left:103px;top:544px">16/01/2026</div>
<div class="t" style="left:178px;top:544px">rembes bensin pak pei ke Yapi</div>
<div class="n" style="right:1123px;top:544px">15.600,00</div>
<div class="n" style="left:806px;top:544px">-</div>
<div class="n" style="right:1031px;top:544px">521.268,00</div>
<div class="t" style="left:103px;top:564px">17/01/2026</div>
<div class="t" style="left:178px;top:564px">padang 17 org lembur Sabtu)</div>
<div class="n" style="right:1123px;top:564px">379.000,00</div>
<div class="n" style="left:806px;top:564px">-</div>
<div class="n" style="right:1031px;top:564px">900.268,00</div>
<div class="t" style="left:103px;top:584px">17/01/2026</div>
<div class="t" style="left:178px;top:584px">Jus 2 Org</div>
<div class="n" style="right:1123px;top:584px">25.000,00</div>
<div class="n" style="left:806px;top:584px">-</div>
<div class="n" style="right:1031px;top:584px">925.268,00</div>
<div class="t" style="left:103px;top:604px">17/01/2026</div>
<div class="t" style="left:178px;top:604px">SV samsung Ganti Connector</div>
<div class="n" style="right:1123px;top:604px">373.585,00</div>
<div class="n" style="left:806px;top:604px">-</div>
<div class="n" style="right:1031px;top:604px;font-size:12.95px">1.298.853,00</div>
<div class="t" style="left:103px;top:624px">19/01/2026</div>
<div class="t" style="left:178px;top:624px">galon 3@ 21000 + ongkos Angkut</div>
<div class="n" style="right:1123px;top:624px">70.000,00</div>
<div class="n" style="left:806px;top:624px">-</div>
<div class="n" style="right:1031px;top:624px;font-size:12.95px">1.368.853,00</div>
<div class="t" style="left:103px;top:644px">21/01/2026</div>
<div class="t" style="left:178px;top:644px">Kantor - Kel Kedsel</div>
<div class="n" style="right:1123px;top:644px">98.500,00</div>
<div class="n" style="left:806px;top:644px">-</div>
<div class="n" style="right:1031px;top:644px;font-size:12.95px">1.467.353,00</div>
<div class="t" style="left:103px;top:664px">21/01/2026</div>
<div class="t" style="left:178px;top:664px">makan di BPN</div>
<div class="n" style="right:1123px;top:664px">24.000,00</div>
<div class="n" style="left:806px;top:664px">-</div>
<div class="n" style="right:1031px;top:664px;font-size:12.95px">1.491.353,00</div>
<div class="t" style="left:103px;top:684px">21/06/2026</div>
<div class="t" style="left:178px;top:684px">BPN utr-Kantor</div>
<div class="n" style="right:1123px;top:684px">15.000,00</div>
<div class="n" style="left:806px;top:684px">-</div>
<div class="n" style="right:1031px;top:684px;font-size:12.95px">1.506.353,00</div>
<div class="t" style="left:103px;top:704px">24/01/2026</div>
<div class="t" style="left:178px;top:704px">AKK 17 Org (lembur Sabtu )</div>
<div class="n" style="right:1123px;top:704px">579.700,00</div>
<div class="n" style="left:806px;top:704px">-</div>
<div class="n" style="right:1031px;top:704px;font-size:12.95px">2.086.053,00</div>
<div class="t" style="left:103px;top:724px">24/01/2026</div>
<div class="t" style="left:178px;top:724px">UANG MASUK</div>
<div class="n" style="right:1223px;top:724px;font-size:12.95px">3.000.000,00</div>
<div class="n" style="right:1031px;top:724px">913.947,00</div>
<div class="t" style="left:103px;top:744px">24/01/2025</div>
<div class="t" style="left:178px;top:744px">aqua 2 @21000 (indomart)</div>
<div class="n" style="right:1123px;top:744px">42.000,00</div>
<div class="t ref" style="left:803px;top:744px">#REF!</div>
<div class="tri" style="left:804px;top:743px"></div>
<div class="t" style="left:103px;top:764px">26/01/2026</div>
<div class="t" style="left:178px;top:764px">kabel tis</div>
<div class="n" style="right:1123px;top:764px">40.000,00</div>
<div class="t ref" style="left:803px;top:764px">#REF!</div>
<div class="tri" style="left:804px;top:763px"></div>
<div class="t" style="left:103px;top:784px">26/01/2026</div>
<div class="t" style="left:178px;top:784px">4 aqua @21000, 1 galon kosong 35000</div>
<div class="t ref" style="left:803px;top:784px">#REF!</div>
<div class="tri" style="left:804px;top:783px"></div>
<div class="t" style="left:103px;top:804px">26/01/2026</div>
<div class="t ref" style="left:803px;top:804px">#REF!</div>
<div class="tri" style="left:804px;top:803px"></div>
<div class="t ref" style="left:803px;top:824px">#REF!</div>
<div class="tri" style="left:804px;top:823px"></div>
<div class="t ref" style="left:803px;top:844px">#REF!</div>
<div class="tri" style="left:804px;top:843px"></div>
<div class="t ref" style="left:803px;top:884px">#REF!</div>
<div class="tri" style="left:804px;top:883px"></div>
<div class="t ref" style="left:803px;top:904px">#REF!</div>
<div class="tri" style="left:804px;top:903px"></div>
<div class="t ref" style="left:803px;top:924px">#REF!</div>
<div class="tri" style="left:804px;top:923px"></div>
<div class="t ref" style="left:803px;top:944px">#REF!</div>
<div class="tri" style="left:804px;top:943px"></div>
<div class="t ref" style="left:803px;top:964px">#REF!</div>
<div class="tri" style="left:804px;top:963px"></div>
<div class="t ref" style="left:803px;top:984px">#REF!</div>
<div class="tri" style="left:804px;top:983px"></div>
<div class="t" style="left:28px;top:884px;font-size:12.4px">FEBRUARI</div>
<div class="t" style="left:899px;top:304px;font-size:14.3px">bon di devi</div>
<div class="a" style="left:26px;top:862px;width:869px;height:20px;background:#ffff00"></div>
<!-- selection -->
<div class="a" style="left:174px;top:802px;width:438px;height:22px;border:2px solid #217346"></div>
<div class="a" style="left:608px;top:820px;width:5px;height:5px;background:#217346;border:1px solid #fff"></div>
<div class="t" style="left:178px;top:804px">O</div>
<div class="a" style="left:189px;top:806px;width:1px;height:15px;background:#000"></div>
<!-- page break lines -->
<div class="a" style="left:26px;top:242px;width:2px;height:748px;background:#1d1d88"></div>
<div class="a" style="left:895px;top:242px;width:3px;height:748px;background:#0c0cd0"></div>
<div class="a" style="left:26px;top:881px;width:872px;height:3px;background:#0c0c9c"></div>

<!-- sheet tabs bar -->
<div class="a" style="left:0;top:990px;width:1920px;height:28px;background:#e6e6e6;border-top:1px solid #9c9c9c"></div>
<!-- nav arrows -->
<svg class="a" style="left:24px;top:997px" width="40" height="14"><path d="M6,3 L2,7 L6,11 Z" fill="#c2c2c2"/><path d="M32,3 L36,7 L32,11 Z" fill="#c2c2c2"/></svg>
<div class="a" style="left:100px;top:991px;width:99px;height:25px;background:#ffff00"></div>
<div class="stab" style="left:100px;width:99px;color:#000">Rekapitulasi</div>
<div class="stab" style="left:199px;width:115px">Member Parkir</div>
<div class="a" style="left:314px;top:990px;width:53px;height:26px;background:#fff;border-bottom:2px solid #217346"></div>
<div class="stab" style="left:314px;width:53px;color:#217346;font-weight:bold">2026</div>
<div class="stab" style="left:367px;width:52px">2025</div>
<div class="stab" style="left:419px;width:52px">2024</div>
<div class="stab" style="left:471px;width:52px">2023</div>
<div class="stab" style="left:523px;width:52px">2022</div>
<div class="stab" style="left:575px;width:52px">2021</div>
<div class="stab" style="left:627px;width:52px">2020</div>
<div class="stab" style="left:679px;width:56px">2019</div>
<div class="stab" style="left:735px;width:52px">2018</div>
<div class="stab" style="left:787px;width:51px">2017</div>
<div class="tsep" style="left:100px"></div><div class="tsep" style="left:199px"></div>
<div class="tsep" style="left:418px"></div><div class="tsep" style="left:470px"></div><div class="tsep" style="left:522px"></div>
<div class="tsep" style="left:574px"></div><div class="tsep" style="left:626px"></div><div class="tsep" style="left:678px"></div>
<div class="tsep" style="left:734px"></div><div class="tsep" style="left:786px"></div><div class="tsep" style="left:837px"></div>
<svg class="a" style="left:869px;top:994px" width="20" height="20"><circle cx="10" cy="10" r="7.5" fill="none" stroke="#6a6a6a" stroke-width="1.4"/><path d="M10,6 V14 M6,10 H14" stroke="#6a6a6a" stroke-width="1.6"/></svg>
<!-- h scrollbar -->
<div class="a" style="left:1153px;top:998px;width:2px;height:2px;background:#9a9a9a"></div>
<div class="a" style="left:1153px;top:1003px;width:2px;height:2px;background:#9a9a9a"></div>
<div class="a" style="left:1153px;top:1008px;width:2px;height:2px;background:#9a9a9a"></div>
<div class="a" style="left:1169px;top:997px;width:730px;height:15px;background:#dcdcdc;border:1px solid #c3c3c3"></div>
<div class="a" style="left:1169px;top:997px;width:15px;height:15px;background:#fff;border:1px solid #c3c3c3"></div>
<svg class="a" style="left:1173px;top:1000px" width="8" height="9"><path d="M6,0.5 L1.5,4.5 L6,8.5 Z" fill="#606060"/></svg>
<div class="a" style="left:1184px;top:997px;width:592px;height:15px;background:#fff;border:1px solid #ababab"></div>
<div class="a" style="left:1884px;top:997px;width:15px;height:15px;background:#fff;border:1px solid #c3c3c3"></div>
<svg class="a" style="left:1888px;top:1000px" width="8" height="9"><path d="M2,0.5 L6.5,4.5 L2,8.5 Z" fill="#606060"/></svg>
<!-- v scrollbar -->
<div class="a" style="left:1899px;top:224px;width:21px;height:766px;background:#e6e6e6"></div>
<div class="a" style="left:1902px;top:225px;width:15px;height:15px;background:#fff;border:1px solid #c3c3c3"></div>
<svg class="a" style="left:1905px;top:229px" width="9" height="7"><path d="M0.5,5.5 L4.5,1 L8.5,5.5 Z" fill="#606060"/></svg>
<div class="a" style="left:1902px;top:271px;width:15px;height:53px;background:#fff;border:1px solid #ababab"></div>
<div class="a" style="left:1902px;top:975px;width:15px;height:15px;background:#fff;border:1px solid #c3c3c3"></div>
<svg class="a" style="left:1905px;top:980px" width="9" height="7"><path d="M0.5,1 L4.5,5.5 L8.5,1 Z" fill="#606060"/></svg>
<!-- status bar -->
<div class="a" style="left:0;top:1018px;width:1920px;height:22px;background:#f3f3f3;border-top:1px solid #d4d4d4"></div>
<div class="rl" style="left:8px;top:1022px;font-size:12px">Enter</div>
<!-- taskbar -->
<div class="a" style="left:0;top:1040px;width:1920px;height:40px;background:#dfdbda"></div>
<div class="a" style="left:49px;top:1040px;width:286px;height:40px;background:#fff"></div>
<div class="a" style="left:88px;top:1053px;font-size:14.6px;line-height:14px;color:#202020;white-space:nowrap">Type here to search</div>
<svg class="a" style="left:0;top:1040px" width="1920" height="40">
 <!-- windows logo -->
 <path d="M16,13 L21.7,12.2 V18.5 H16 Z M22.8,12 L32,10.8 V18.5 H22.8 Z M16,20 H21.7 V26.5 L16,25.7 Z M22.8,20 H32 V28 L22.8,26.8 Z" fill="#000"/>
 <!-- magnifier -->
 <circle cx="70.6" cy="17.2" r="5" fill="none" stroke="#111" stroke-width="1.2"/>
 <path d="M67,21 L60.5,27.5" stroke="#111" stroke-width="1.3"/>
 <!-- zebra -->
 <path d="M258,40 Q268,33 290,33 Q315,31 335,32 V40 Z" fill="#dcc39a"/>
 <path d="M268,17 Q269,13 272,9 L273,4 L276,3 Q283,6 291,10 Q300,12 308,12 Q314,12 316,15 Q317,20 313,25 L312,37 L309,37 L308,27 Q300,27 292,26 L291,37 L288,37 L286,24 Q282,19 277,17 Q273,18 270,19 Z" fill="#ececf4" stroke="#8a8aa8" stroke-width="0.5"/>
 <path d="M273,4 Q283,5 291,10" fill="none" stroke="#2e2e48" stroke-width="2"/>
 <path d="M277,8 L280,16 M281,9 L284,18 M285,10 L288,21 M290,11 L292,24 M295,12 L297,25 M300,12 L301,25 M305,12 L304,24 M310,13 L307,22 M313,16 L309,20" stroke="#34344e" stroke-width="1.1"/>
 <path d="M315,14 Q320,20 321,30" fill="none" stroke="#34344e" stroke-width="2"/>
 <circle cx="269.5" cy="16.5" r="1.8" fill="#222"/>
 <!-- task buttons -->
 <rect x="535" y="0" width="45" height="38" fill="#efebea"/>
 <!-- underlines -->
 <g fill="#1a6ec8">
  <rect x="343" y="38" width="40" height="2"/><rect x="392" y="38" width="40" height="2"/>
  <rect x="441" y="38" width="40" height="2"/><rect x="490" y="38" width="40" height="2"/>
  <rect x="535" y="38" width="45" height="2"/><rect x="588" y="38" width="40" height="2"/>
  <rect x="637" y="38" width="40" height="2"/><rect x="686" y="38" width="40" height="2"/>
  <rect x="735" y="38" width="40" height="2"/>
 </g>
 <!-- edge -->
 <defs>
  <linearGradient id="eg" x1="0" y1="0" x2="0.6" y2="1"><stop offset="0" stop-color="#3cb8f2"/><stop offset="0.45" stop-color="#1b86e0"/><stop offset="1" stop-color="#0f4fae"/></linearGradient>
  <linearGradient id="eg2" x1="0" y1="0" x2="1" y2="0.6"><stop offset="0" stop-color="#25c0ef"/><stop offset="0.55" stop-color="#2fd09a"/><stop offset="1" stop-color="#6dd35a"/></linearGradient>
  <linearGradient id="xg" x1="0" y1="0" x2="0" y2="1"><stop offset="0" stop-color="#21a366"/><stop offset="1" stop-color="#107c41"/></linearGradient>
  <linearGradient id="wg" x1="0" y1="0" x2="0" y2="1"><stop offset="0" stop-color="#41a5ee"/><stop offset="1" stop-color="#185abd"/></linearGradient>
 </defs>
 <circle cx="363.4" cy="19.9" r="12" fill="url(#eg)"/>
 <path d="M351.6,17.5 Q354,8 364,8 Q375.4,8 375.4,19.5 Q375.4,25.5 369.5,25.5 L366,25.5 Q360.8,25.2 360.5,21 Q360.5,16.5 364.5,16.5 Q358,13.5 351.6,17.5 Z" fill="url(#eg2)"/>
 <path d="M360.5,21 Q360.5,16.5 364.5,16.5 Q367.5,17 367.5,19.5 Q365,18.8 363.8,20.5 Q363,23.5 367,25 Q371,26.2 374.8,25.2 Q372,28.5 366,28 Q360.5,26.5 360.5,21 Z" fill="#d6f3ee"/>
 <path d="M366,28 Q371,28.2 374.8,25.2 Q373.5,28.5 371,29.5 Q368,29.5 366,28 Z" fill="#1a2f6e"/>
 <!-- chrome -->
 <circle cx="413" cy="20.5" r="12.5" fill="#2a9c45"/>
 <path d="M413,20.5 L402.2,14.25 A12.5,12.5 0 0 1 423.8,14.25 Z" fill="#e53a2f"/>
 <path d="M413,20.5 L423.8,14.25 A12.5,12.5 0 0 1 419,31.5 Z" fill="#f9c31c"/>
 <circle cx="413" cy="20.5" r="5.6" fill="#fff"/>
 <circle cx="413" cy="20.5" r="4.4" fill="#2f73d9"/>
 <circle cx="418.6" cy="26" r="6.8" fill="#7a4fc4"/>
 <path d="M416,29.5 L418.6,22.5 L421.2,29.5 M417,27 H420.2" fill="none" stroke="#fff" stroke-width="1.1"/>
 <!-- firefox -->
 <circle cx="460.5" cy="19.5" r="11.5" fill="#ff7139"/>
 <path d="M449,19 A11.5,11.5 0 0 0 472,19 Q470,29 460,29 Q450,28 449,19 Z" fill="#f0346b"/>
 <path d="M465,9 Q473,13 472,21 Q468,12 462,12 Z" fill="#ffbd4f"/>
 <circle cx="461" cy="21" r="4.6" fill="#7542e5"/>
 <path d="M455,16 Q460,13 466,17" fill="none" stroke="#ff9640" stroke-width="2"/>
 <!-- explorer -->
 <rect x="496" y="12" width="24" height="19" rx="1" fill="#ffd75e"/>
 <rect x="498" y="10" width="9" height="3" fill="#e8a93a"/>
 <path d="M501,31 V21 H515 V31 H511 V25 H505 V31 Z" fill="#2a78c6"/>
 <!-- excel -->
 <rect x="553.5" y="9" width="17.5" height="21" rx="1.5" fill="url(#xg)"/>
 <path d="M553.5,16 H571 M553.5,23 H571 M562,9 V30" stroke="#33c481" stroke-width="0.6" opacity="0.6"/>
 <rect x="547" y="13.7" width="12.3" height="12.3" rx="1" fill="#107c41"/>
 <path d="M550,16.5 L556,23.5 M556,16.5 L550,23.5" stroke="#fff" stroke-width="1.7"/>
 <!-- word -->
 <rect x="602.3" y="9" width="17.5" height="21" rx="1.5" fill="url(#wg)"/>
 <rect x="595.8" y="13.7" width="12.3" height="12.3" rx="1" fill="#185abd"/>
 <path d="M597.5,16.5 L599.5,23.5 L602,18 L604.5,23.5 L606.5,16.5" fill="none" stroke="#fff" stroke-width="1.3"/>
 <!-- settings gear -->
 <g transform="translate(657,19.6)">
  <circle r="6.2" fill="none" stroke="#3c3c3c" stroke-width="3.2"/>
  <g fill="#3c3c3c">
   <rect x="-1.8" y="-9.5" width="3.6" height="4"/><rect x="-1.8" y="5.5" width="3.6" height="4"/>
   <rect x="-9.5" y="-1.8" width="4" height="3.6"/><rect x="5.5" y="-1.8" width="4" height="3.6"/>
   <rect x="-1.8" y="-9.5" width="3.6" height="4" transform="rotate(45)"/><rect x="-1.8" y="5.5" width="3.6" height="4" transform="rotate(45)"/>
   <rect x="-9.5" y="-1.8" width="4" height="3.6" transform="rotate(45)"/><rect x="5.5" y="-1.8" width="4" height="3.6" transform="rotate(45)"/>
  </g>
 </g>
 <!-- acrobat -->
 <rect x="695.4" y="9" width="20.8" height="21" rx="3" fill="#b30b00"/>
 <path d="M699.5,26 Q703,22 705.5,14 Q706,11 705,11.5 Q703.5,13 706.5,20 Q709,24 712.5,24.5 Q713,23 708,22.5 Q703,23 699.5,26 Z" fill="none" stroke="#fff" stroke-width="1.3"/>
 <!-- snipping -->
 <ellipse cx="753" cy="16" rx="9" ry="6" fill="none" stroke="#e8788a" stroke-width="1.3" transform="rotate(-20 753 16)"/>
 <path d="M752,12 L760,26 M761,12 L754,26" stroke="#3d8fd6" stroke-width="1.4"/>
 <circle cx="753" cy="28" r="2.2" fill="none" stroke="#3d8fd6" stroke-width="1.3"/>
 <circle cx="761" cy="28" r="2.2" fill="none" stroke="#3d8fd6" stroke-width="1.3"/>
 <!-- red badge -->
 <circle cx="1536" cy="13.5" r="6" fill="#c1201a"/>
 <text x="1536" y="17" font-family="Liberation Sans" font-size="8.5" font-weight="bold" fill="#fff" text-anchor="middle">5</text>
 <!-- tray -->
 <path d="M1707,22.5 L1713.5,16 L1720,22.5" fill="none" stroke="#222" stroke-width="1.3"/>
 <rect x="1733" y="15" width="7" height="9" rx="1.5" fill="none" stroke="#222" stroke-width="1.2"/>
 <path d="M1740,18 L1743,16 V23 L1740,21" fill="none" stroke="#222" stroke-width="1.1"/>
 <path d="M1732,14 Q1736.5,10 1741,14 M1732,26 Q1736.5,30 1741,26" fill="none" stroke="#777" stroke-width="1"/>
 <rect x="1754.5" y="14.5" width="14" height="10" fill="none" stroke="#222" stroke-width="1.1"/>
 <path d="M1758,28.5 H1765 M1761.5,24.5 V28.5" stroke="#222" stroke-width="1.1"/>
 <rect x="1753" y="13" width="4" height="4" fill="#dfdbda" stroke="#222" stroke-width="0.9"/>
 <path d="M1777,17 H1780 L1784,13.5 V26.5 L1780,23 H1777 Z" fill="none" stroke="#222" stroke-width="1.1"/>
 <path d="M1786.5,17 Q1788,20 1786.5,23 M1789,15 Q1791.5,20 1789,25" fill="none" stroke="#444" stroke-width="1"/>
 <path d="M1791.5,13 Q1795,20 1791.5,27" fill="none" stroke="#999" stroke-width="1"/>
 <!-- notification -->
 <path d="M1879,12 H1895 V23 H1885 L1882,26 V23 H1879 Z" fill="#111"/>
 <path d="M1882,15.5 H1892 M1882,18.5 H1892 M1882,21 H1889" stroke="#dfdbda" stroke-width="1"/>
 <circle cx="1894.6" cy="27" r="7" fill="#dfdbda" stroke="#8a8a8a" stroke-width="1"/>
 <text x="1894.6" y="31" font-family="Liberation Sans" font-size="10.5" fill="#111" text-anchor="middle">3</text>
 <rect x="1914" y="0" width="1" height="40" fill="#a8a4a3"/>
</svg>
<div class="a" style="left:1818px;top:1045px;font-size:12.3px;line-height:13px;color:#111;white-space:nowrap">15:19</div>
<div class="a" style="left:1803px;top:1063px;font-size:12px;line-height:13px;color:#111;white-space:nowrap">31/01/2026</div>
<!-- status bar icons -->
<svg class="a" style="left:1620px;top:1018px" width="300" height="22">
 <g fill="none" stroke="#5a5a5a" stroke-width="1">
  <rect x="13.5" y="4.5" width="12" height="12"/><path d="M13.5,8.5 H25.5 M13.5,12.5 H25.5 M17.5,4.5 V16.5 M21.5,4.5 V16.5"/>
  <rect x="53.5" y="4.5" width="13" height="12"/><rect x="56.5" y="7.5" width="7" height="6"/><path d="M58,9.5 H62 M58,11.5 H62"/>
  <rect x="93.5" y="4.5" width="13" height="12"/><path d="M93.5,10.5 H100.5 V4.5 M97.5,4.5 V10.5"/>
 </g>
 <path d="M126,11.5 H133" stroke="#8a8a8a" stroke-width="1"/>
 <path d="M138,11.5 H240" stroke="#a0a0a0" stroke-width="1"/>
 <path d="M189.5,8 V14" stroke="#8a8a8a" stroke-width="1"/>
 <path d="M244,11.5 H252 M248,7.5 V15.5" stroke="#8a8a8a" stroke-width="1"/>
</svg>
<div class="a" style="left:1886px;top:1023px;font-size:11px;line-height:11px;color:#b4b4b4">100%</div>
</body></html>
